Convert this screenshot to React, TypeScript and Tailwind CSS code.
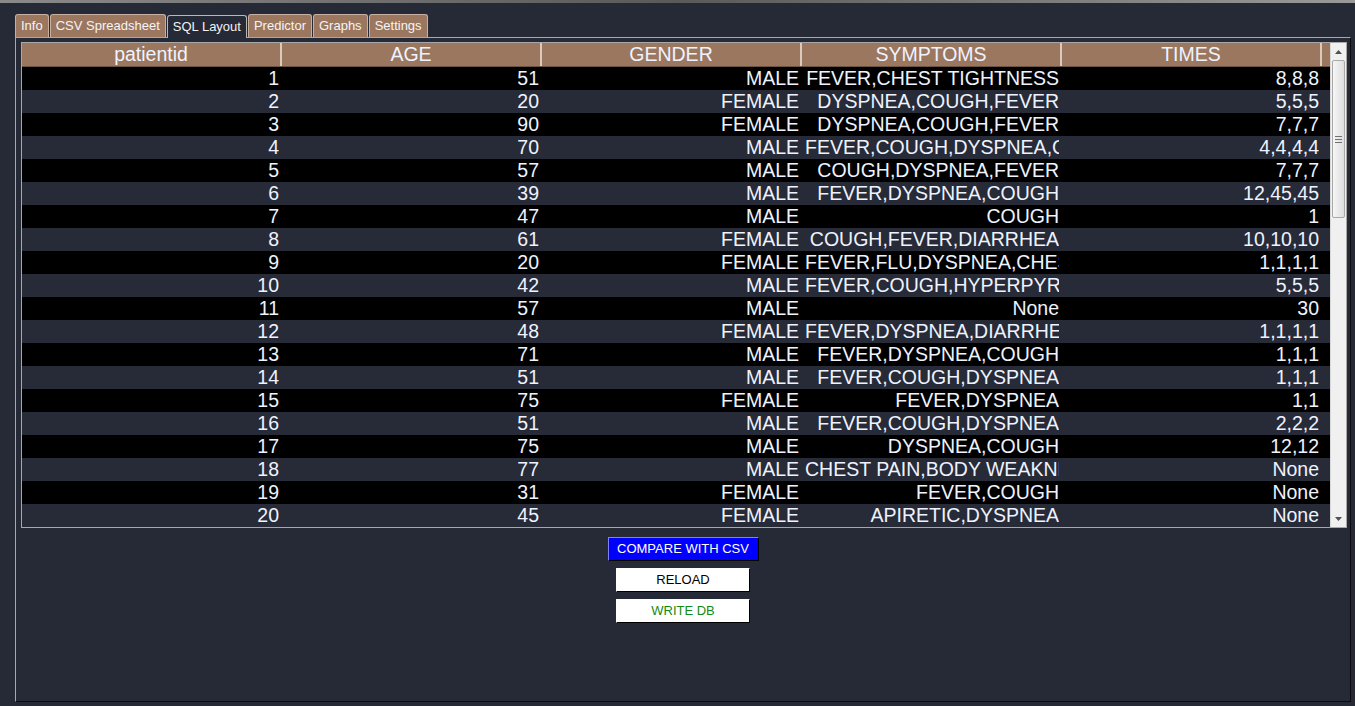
import React from "react";

const rows: [number, number, string, string, string][] = [
  [1, 51, "MALE", "FEVER,CHEST TIGHTNESS", "8,8,8"],
  [2, 20, "FEMALE", "DYSPNEA,COUGH,FEVER", "5,5,5"],
  [3, 90, "FEMALE", "DYSPNEA,COUGH,FEVER", "7,7,7"],
  [4, 70, "MALE", "FEVER,COUGH,DYSPNEA,CHEST PAIN", "4,4,4,4"],
  [5, 57, "MALE", "COUGH,DYSPNEA,FEVER", "7,7,7"],
  [6, 39, "MALE", "FEVER,DYSPNEA,COUGH", "12,45,45"],
  [7, 47, "MALE", "COUGH", "1"],
  [8, 61, "FEMALE", "COUGH,FEVER,DIARRHEA", "10,10,10"],
  [9, 20, "FEMALE", "FEVER,FLU,DYSPNEA,CHEST PAIN", "1,1,1,1"],
  [10, 42, "MALE", "FEVER,COUGH,HYPERPYREXIA", "5,5,5"],
  [11, 57, "MALE", "None", "30"],
  [12, 48, "FEMALE", "FEVER,DYSPNEA,DIARRHEA,COUGH", "1,1,1,1"],
  [13, 71, "MALE", "FEVER,DYSPNEA,COUGH", "1,1,1"],
  [14, 51, "MALE", "FEVER,COUGH,DYSPNEA", "1,1,1"],
  [15, 75, "FEMALE", "FEVER,DYSPNEA", "1,1"],
  [16, 51, "MALE", "FEVER,COUGH,DYSPNEA", "2,2,2"],
  [17, 75, "MALE", "DYSPNEA,COUGH", "12,12"],
  [18, 77, "MALE", "CHEST PAIN,BODY WEAKNESS", "None"],
  [19, 31, "FEMALE", "FEVER,COUGH", "None"],
  [20, 45, "FEMALE", "APIRETIC,DYSPNEA", "None"],
];

const tabs = ["Info", "CSV Spreadsheet", "SQL Layout", "Predictor", "Graphs", "Settings"];
const headers = ["patientid", "AGE", "GENDER", "SYMPTOMS", "TIMES"];

function Cell({ children }: { children: React.ReactNode }) {
  return (
    <div className="w-[260px] shrink-0 px-[3px]">
      <div className="overflow-hidden whitespace-nowrap text-right">{children}</div>
    </div>
  );
}

function Scrollbar() {
  return (
    <div className="w-[16px] shrink-0 bg-[#f0f0f0] flex flex-col border-l border-[#d8d8d8]">
      <div className="h-[17px] flex items-center justify-center">
        <svg width="7" height="4" viewBox="0 0 7 4">
          <path d="M0 4 L3.5 0 L7 4 Z" fill="#505050" />
        </svg>
      </div>
      <div className="mx-[1px] h-[158px] rounded-[2px] border border-[#a8a8a8] bg-gradient-to-r from-[#f6f6f6] to-[#dedede] flex items-center justify-center">
        <div className="flex flex-col gap-[2px]">
          <div className="w-[7px] h-[1px] bg-[#707070]" />
          <div className="w-[7px] h-[1px] bg-[#707070]" />
          <div className="w-[7px] h-[1px] bg-[#707070]" />
        </div>
      </div>
      <div className="flex-1" />
      <div className="h-[17px] flex items-center justify-center">
        <svg width="7" height="4" viewBox="0 0 7 4">
          <path d="M0 0 L3.5 4 L7 0 Z" fill="#505050" />
        </svg>
      </div>
    </div>
  );
}

export default function App() {
  return (
    <div
      className="w-[1355px] h-[706px] bg-[#262936] overflow-hidden flex flex-col"
      style={{ fontFamily: '"Liberation Sans", Arial, sans-serif' }}
    >
      {/* window top strip */}
      <div className="h-[3px] bg-gradient-to-r from-[#8a8a8a] via-[#5a5a5a] to-[#9a9a9a]" />

      {/* tabs */}
      <div className="flex items-end gap-[1px] pl-[15px] mt-[11px] h-[23px]">
        {tabs.map((t) => {
          const sel = t === "SQL Layout";
          return (
            <div
              key={t}
              className={
                sel
                  ? "h-[23px] px-[5px] flex items-center text-[13px] text-[#f2f2f2] bg-[#262936] border-t border-l border-r border-[#b8b8b8] rounded-t-[3px] relative top-[1px]"
                  : "h-[23px] px-[5px] flex items-center text-[13px] text-[#f4f4f4] bg-[#9b7760] border-t border-l border-r border-[#c8b0a0] rounded-t-[3px]"
              }
            >
              {t}
            </div>
          );
        })}
      </div>

      {/* panel */}
      <div className="ml-[15px] mr-[4px] h-[665px] border-t border-l border-[#a8a8a8] border-r border-b border-r-[#0c0c0c] border-b-[#0c0c0c] flex flex-col">
        <div className="ml-[5px] mr-[3px] mt-[4px] border border-[#a8a8a8] flex">
          <div className="flex-1 flex flex-col text-[19.5px] text-[#eef3ff] leading-[23px]">
            {/* header */}
            <div className="flex h-[24px] bg-[#9b7760] border-b border-[#6e5442]">
              {headers.map((h) => (
                <div
                  key={h}
                  className="w-[260px] shrink-0 text-center border-r-2 border-[#dccbbd] leading-[23px]"
                >
                  {h}
                </div>
              ))}
              <div className="flex-1" />
            </div>
            {rows.map((r, i) => (
              <div
                key={r[0]}
                className={i % 2 === 0 ? "flex h-[23px] bg-black" : "flex h-[23px] bg-[#272a37]"}
              >
                <Cell>{r[0]}</Cell>
                <Cell>{r[1]}</Cell>
                <Cell>{r[2]}</Cell>
                <Cell>{r[3]}</Cell>
                <Cell>{r[4]}</Cell>
                <div className="flex-1" />
              </div>
            ))}
          </div>
          <Scrollbar />
        </div>

        {/* buttons */}
        <div className="flex flex-col items-center gap-[7px] mt-[9px] text-[13px]">
          <button className="w-[151px] h-[24px] bg-[#0000ff] text-white border border-t-[#8080ff] border-l-[#8080ff] border-r-black border-b-black">
            COMPARE WITH CSV
          </button>
          <button className="w-[134px] h-[24px] bg-white text-black border border-t-white border-l-white border-r-black border-b-black">
            RELOAD
          </button>
          <button className="w-[134px] h-[24px] bg-white text-[#138a13] border border-t-white border-l-white border-r-black border-b-black">
            WRITE DB
          </button>
        </div>
      </div>
    </div>
  );
}
